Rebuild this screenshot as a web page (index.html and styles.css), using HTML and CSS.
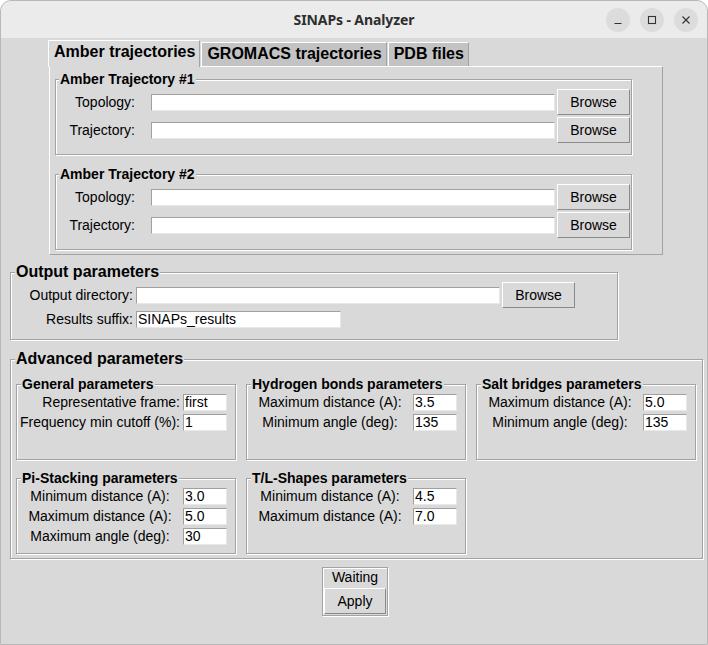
FILE: index.html
```html
<!DOCTYPE html>
<html>
<head>
<meta charset="utf-8">
<title>SINAPs - Analyzer</title>
<link rel="stylesheet" href="styles.css">
</head>
<body>
<div class="window">
  <div class="titlebar">
    <div></div>
    <div class="title">SINAPs - Analyzer</div>
    <div class="wbtns">
      <div class="wbtn"><svg width="10" height="10" viewBox="0 0 10 10"><path d="M1.5 8.5h7" stroke="#333" stroke-width="1.2" fill="none"/></svg></div>
      <div class="wbtn"><svg width="10" height="10" viewBox="0 0 10 10"><rect x="1.5" y="1.5" width="7" height="7" stroke="#333" stroke-width="1.1" fill="none"/></svg></div>
      <div class="wbtn"><svg width="10" height="10" viewBox="0 0 10 10"><path d="M1.5 1.5l7 7M8.5 1.5l-7 7" stroke="#333" stroke-width="1.1" fill="none"/></svg></div>
    </div>
  </div>
  <div class="content">
    <div class="notebook">
      <div class="tabs">
        <div class="tab sel">Amber trajectories</div>
        <div class="tab">GROMACS trajectories</div>
        <div class="tab">PDB files</div>
      </div>
      <div class="pane">
        <div class="lf traj">
          <div class="lf-title amber">Amber Trajectory #1</div>
          <div class="rows">
            <label>Topology:</label><div class="entry"></div><div class="btn">Browse</div>
            <label>Trajectory:</label><div class="entry"></div><div class="btn">Browse</div>
          </div>
        </div>
        <div class="lf traj second">
          <div class="lf-title amber">Amber Trajectory #2</div>
          <div class="rows">
            <label>Topology:</label><div class="entry"></div><div class="btn">Browse</div>
            <label>Trajectory:</label><div class="entry"></div><div class="btn">Browse</div>
          </div>
        </div>
      </div>
    </div>

    <div class="lf out">
      <div class="lf-title big">Output parameters</div>
      <div class="out-rows">
        <label>Output directory:</label><div class="entry wide"></div><div class="btn">Browse</div>
        <label>Results suffix:</label><div class="entry suffix">SINAPs_results</div><div></div>
      </div>
    </div>

    <div class="lf adv">
      <div class="lf-title big">Advanced parameters</div>
      <div class="sub-grid">
        <div class="lf sub">
          <div class="lf-title">General parameters</div>
          <div class="sub-rows right">
            <label>Representative frame:</label><div class="entry small">first</div>
            <label>Frequency min cutoff (%):</label><div class="entry small">1</div>
          </div>
        </div>
        <div class="lf sub">
          <div class="lf-title">Hydrogen bonds parameters</div>
          <div class="sub-rows">
            <label>Maximum distance (A):</label><div class="entry small">3.5</div>
            <label>Minimum angle (deg):</label><div class="entry small">135</div>
          </div>
        </div>
        <div class="lf sub">
          <div class="lf-title">Salt bridges parameters</div>
          <div class="sub-rows">
            <label>Maximum distance (A):</label><div class="entry small">5.0</div>
            <label>Minimum angle (deg):</label><div class="entry small">135</div>
          </div>
        </div>
        <div class="lf sub">
          <div class="lf-title">Pi-Stacking parameters</div>
          <div class="sub-rows">
            <label>Minimum distance (A):</label><div class="entry small">3.0</div>
            <label>Maximum distance (A):</label><div class="entry small">5.0</div>
            <label>Maximum angle (deg):</label><div class="entry small">30</div>
          </div>
        </div>
        <div class="lf sub">
          <div class="lf-title">T/L-Shapes parameters</div>
          <div class="sub-rows">
            <label>Minimum distance (A):</label><div class="entry small">4.5</div>
            <label>Maximum distance (A):</label><div class="entry small">7.0</div>
          </div>
        </div>
      </div>
    </div>

    <div class="status">
      <div class="waiting">Waiting</div>
      <div class="btn apply">Apply</div>
    </div>
  </div>
</div>
</body>
</html>
```

FILE: styles.css
```css
* { box-sizing: border-box; }
html, body { margin: 0; padding: 0; background: #ffffff; }
body {
  font-family: "Liberation Sans", Arial, sans-serif;
  font-size: 14px;
  color: #000;
}

.window {
  width: 708px;
  height: 645px;
  border: 1px solid #b8b8b8;
  border-radius: 11px 11px 0 0;
  overflow: hidden;
  background: #d9d9d9;
  display: flex;
  flex-direction: column;
}

.titlebar {
  height: 37px;
  flex: none;
  background: #ebebeb;
  display: grid;
  grid-template-columns: 1fr auto 1fr;
  align-items: center;
}
.title {
  font-family: "Noto Sans", "DejaVu Sans", sans-serif;
  font-weight: 700;
  font-size: 14px;
  color: #2e2e2e;
  letter-spacing: -0.1px;
}
.wbtns {
  justify-self: end;
  display: flex;
  gap: 10px;
  padding-right: 9px;
}
.wbtn {
  width: 24px;
  height: 24px;
  border-radius: 50%;
  background: #dcdcdc;
  display: flex;
  align-items: center;
  justify-content: center;
}

.content {
  flex: 1;
  display: flex;
  flex-direction: column;
  align-items: flex-start;
}

/* Notebook */
.notebook { margin: 1px 0 0 47px; }
.tabs {
  display: flex;
  align-items: flex-end;
  height: 27px;
}
.tab {
  height: 24px;
  padding: 0 4px 0 5px;
  background: #c3c3c3;
  border-top: 1px solid #ffffff;
  border-left: 1px solid #ffffff;
  border-right: 1px solid #a3a3a3;
  font-size: 16px;
  font-weight: 700;
  line-height: 21px;
  margin-left: 1px;
}
.tab.sel {
  height: 27px;
  margin-left: 0;
  margin-bottom: -1px;
  background: #d9d9d9;
  position: relative;
  z-index: 1;
  line-height: 22px;
}
.pane {
  margin-left: 1px;
  width: 614px;
  border: 1px solid;
  border-color: #ffffff #a3a3a3 #a3a3a3 #ffffff;
  padding: 12px 0 4px 5px;
}

/* Label frames */
.lf {
  border: 1px solid #a3a3a3;
  box-shadow: inset 1px 1px 0 #ffffff, 1px 1px 0 #ffffff;
}
.lf-title {
  width: max-content;
  margin: -9px 0 0 4px;
  padding: 0 1px;
  background: #d9d9d9;
  font-weight: 700;
  line-height: 16px;
  position: relative;
}
.lf-title.amber { margin-left: 3px; }
.lf-title.big {
  font-size: 16px;
  line-height: 18px;
  margin-top: -10px;
}

.traj { width: 577px; }
.traj.second { margin-top: 19px; }

.rows {
  display: grid;
  grid-template-columns: 95px 406px 73px;
  grid-auto-rows: 26px;
  row-gap: 2px;
  align-items: center;
  margin-top: 2px;
  padding-bottom: 11px;
}
.rows label, .out-rows label, .sub-rows label {
  white-space: nowrap;
  line-height: 17px;
}
.rows label { text-align: right; padding-right: 16px; }
.rows .entry { width: 404px; }

.entry {
  height: 17px;
  background: #ffffff;
  border: 1px solid;
  border-color: #a0a0a0 #e8e8e8 #e8e8e8 #a0a0a0;
  line-height: 15px;
  padding-left: 1px;
  white-space: nowrap;
}
.btn {
  height: 26px;
  border: 1px solid;
  border-color: #ffffff #8a8a8a #8a8a8a #ffffff;
  display: flex;
  align-items: center;
  justify-content: center;
  background: #d9d9d9;
}

/* Output */
.out {
  width: 608px;
  margin: 17px 0 0 9px;
}
.out-rows {
  display: grid;
  grid-template-columns: 125px 366px 73px;
  grid-template-rows: 26px 18px;
  row-gap: 2px;
  align-items: center;
  margin-top: 1px;
  padding-bottom: 11px;
}
.out-rows label { text-align: right; padding-right: 3px; }
.entry.wide { width: 364px; }
.entry.suffix { width: 205px; }

/* Advanced */
.adv {
  width: 693px;
  margin: 19px 0 0 9px;
  padding-bottom: 4px;
}
.sub-grid {
  display: grid;
  grid-template-columns: repeat(3, 220px);
  grid-template-rows: 76px 76px;
  column-gap: 10px;
  row-gap: 18px;
  margin: 16px 0 0 5px;
}
.sub-rows {
  display: grid;
  grid-template-columns: 166px 44px;
  grid-auto-rows: 20px;
  align-items: center;
}
.sub-rows label { text-align: center; }
.sub-rows.right label { text-align: right; padding-right: 3px; }
.entry.small { width: 44px; }

/* Status */
.status {
  align-self: center;
  margin: 8px 0 0 2px;
  width: 66px;
  border: 1px solid #a3a3a3;
  box-shadow: inset 1px 1px 0 #ffffff, 1px 1px 0 #ffffff;
  padding: 0 1px 1px 1px;
}
.waiting {
  height: 20px;
  line-height: 18px;
  text-align: center;
}
.apply { width: 62px; }
```
